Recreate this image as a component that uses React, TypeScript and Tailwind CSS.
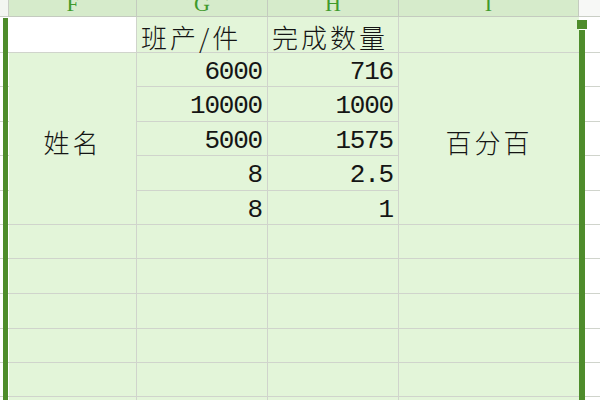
import React from "react";

const ROW_START = [
  "row-start-1",
  "row-start-2",
  "row-start-3",
  "row-start-4",
  "row-start-5",
  "row-start-6",
  "row-start-7",
  "row-start-8",
  "row-start-9",
  "row-start-10",
  "row-start-11",
  "row-start-12",
  "row-start-13",
];
const COL_START = ["col-start-1", "col-start-2", "col-start-3", "col-start-4", "col-start-5", "col-start-6"];

const cellBg = "bg-[#e3f5d9]";
const line = "border-[#d0d4cc]";

function Cell({
  row,
  col,
  className = "",
  children,
}: {
  row: number;
  col: number;
  className?: string;
  children?: React.ReactNode;
}) {
  return <div className={`${ROW_START[row - 1]} ${COL_START[col - 1]} ${className}`}>{children}</div>;
}

function NumCell({ v, row, col }: { v: string; row: number; col: number }) {
  return (
    <Cell row={row} col={col} className={`${cellBg} border-b border-r ${line} flex items-center justify-end pr-[5px] pt-[4px]`}>
      <span className="font-['Liberation_Mono',monospace] text-[26px] tracking-[-1.2px] leading-none text-[#151515]">
        {v}
      </span>
    </Cell>
  );
}

const cjk = "text-[26px] leading-none tracking-[3px] text-[#151515] whitespace-nowrap font-light";

export default function App() {
  const gNums = ["6000", "10000", "5000", "8", "8"];
  const hNums = ["716", "1000", "1575", "2.5", "1"];
  const headers = ["F", "G", "H", "I"];
  const emptyRows = [8, 9, 10, 11, 12, 13];
  const allRows = [2, 3, 4, 5, 6, 7, 8, 9, 10, 11, 12, 13];
  return (
    <div className="relative w-[600px] h-[400px] overflow-hidden bg-white font-['Noto_Sans_CJK_SC',sans-serif]">
      <div className="grid grid-cols-[9px_128px_131px_131px_180px_21px] grid-rows-[17px_36px_34px_35px_34px_35px_34px_34px_35px_35px_34px_34px_34px]">
        {/* header row */}
        <Cell row={1} col={1} className="bg-[#f3f6f1] border-b border-r border-[#c9cec5]" />
        {headers.map((h, i) => (
          <Cell
            key={h}
            row={1}
            col={i + 2}
            className="bg-[#d6ebcb] border-b border-r border-[#c4cbbf] overflow-hidden flex justify-center"
          >
            <span className="block -mt-[6px] font-['Liberation_Serif',serif] text-[22px] leading-[20px] text-[#3f9a2c]">
              {h}
            </span>
          </Cell>
        ))}
        <Cell row={1} col={6} className="bg-[#f7f8f6] border-b border-[#c9cec5]" />

        {/* left & right strips */}
        {allRows.map((r) => (
          <React.Fragment key={r}>
            <Cell row={r} col={1} className={`bg-white border-b ${line}`} />
            <Cell row={r} col={6} className={`bg-white border-b ${line}`} />
          </React.Fragment>
        ))}

        {/* row 1 */}
        <Cell row={2} col={2} className={`bg-white border-b border-r ${line}`} />
        <Cell row={2} col={3} className={`${cellBg} border-b border-r ${line} flex items-center pl-[4px] pt-[5px]`}>
          <span className={cjk}>班产/件</span>
        </Cell>
        <Cell row={2} col={4} className={`${cellBg} border-b border-r ${line} flex items-center pl-[4px] pt-[5px]`}>
          <span className={cjk}>完成数量</span>
        </Cell>
        <Cell row={2} col={5} className={`${cellBg} border-b ${line}`} />

        {/* merged F2:F6 */}
        <Cell row={3} col={2} className={`row-span-5 ${cellBg} border-b border-r ${line} flex items-center justify-center pt-[6px]`}>
          <span className={cjk}>姓名</span>
        </Cell>
        {gNums.map((v, i) => (
          <NumCell key={"g" + i} v={v} row={i + 3} col={3} />
        ))}
        {hNums.map((v, i) => (
          <NumCell key={"h" + i} v={v} row={i + 3} col={4} />
        ))}
        {/* merged I2:I6 */}
        <Cell row={3} col={5} className={`row-span-5 ${cellBg} border-b ${line} flex items-center justify-center pt-[6px]`}>
          <span className={cjk}>百分百</span>
        </Cell>

        {/* empty rows */}
        {emptyRows.map((r) => (
          <React.Fragment key={"e" + r}>
            <Cell row={r} col={2} className={`${cellBg} border-b border-r ${line}`} />
            <Cell row={r} col={3} className={`${cellBg} border-b border-r ${line}`} />
            <Cell row={r} col={4} className={`${cellBg} border-b border-r ${line}`} />
            <Cell row={r} col={5} className={`${cellBg} border-b ${line}`} />
          </React.Fragment>
        ))}
      </div>

      {/* selection borders */}
      <div className="absolute left-[3px] top-[18px] bottom-0 w-[5px] bg-[#4e8c2b]" />
      <div className="absolute left-[579px] top-[30px] bottom-0 w-[6px] bg-[#4e8c2b]" />
      <div className="absolute left-[577px] top-[20px] w-[10px] h-[9px] bg-[#4e8c2b]" />
    </div>
  );
}
